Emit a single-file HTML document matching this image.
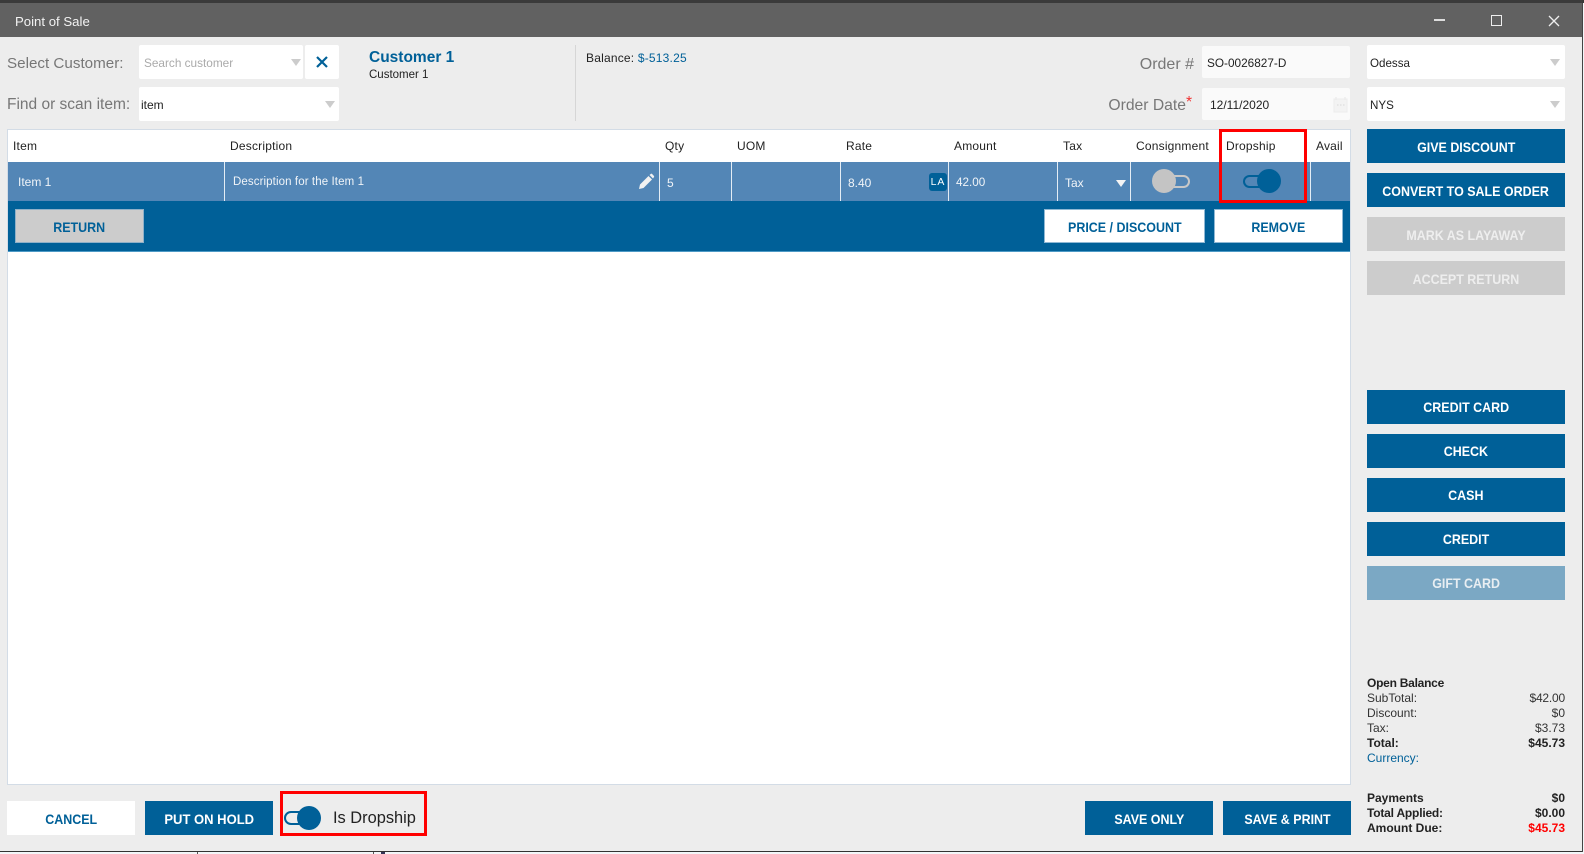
<!DOCTYPE html>
<html><head><meta charset="utf-8"><title>Point of Sale</title>
<style>
*{box-sizing:border-box}
html,body{margin:0;padding:0;width:1584px;height:854px;overflow:hidden;background:#f3f6f9;font-family:"Liberation Sans",sans-serif}
.a{position:absolute}
.t{position:absolute;white-space:nowrap;line-height:16px;font-size:12px;color:#222}
.h{position:absolute;white-space:nowrap;line-height:16px;font-size:12px;color:#222;top:138px;letter-spacing:.2px}
.w{position:absolute;white-space:nowrap;line-height:16px;font-size:12px;color:#f0f4f8}
.b{position:absolute;display:flex;align-items:center;justify-content:center;height:34px;padding-top:1px;font-size:14px;font-weight:bold;color:#fff;background:#006098;white-space:nowrap}
.b span{display:inline-block;transform:scaleX(.89)}
.r{width:198px;left:1367px}
.p{padding-top:0}
.l{background:#fff;color:#006098;border:1px solid #8fb8d4}
.lb{position:absolute;white-space:nowrap;font-size:16px;line-height:20px;color:#777}
.box{position:absolute;background:#fff;border-radius:2px}
.v{position:absolute;width:1px;top:162px;height:39px;background:#e4edf5}
.rb{position:absolute;border:3px solid #f00}
.tri{position:absolute;width:0;height:0;border-left:5px solid transparent;border-right:5px solid transparent;border-top:7px solid #ccc}
.rt{position:absolute;right:19px;white-space:nowrap;font-size:12px;line-height:15px;color:#333}
.lt{position:absolute;left:1367px;white-space:nowrap;font-size:12px;line-height:15px;color:#333}
.bd{font-weight:bold;color:#222}
</style></head><body>
<div class="a" style="left:0;top:0;width:1584px;height:3px;background:#3a3a3a"></div>
<div class="a" style="left:0;top:3px;width:1582px;height:34px;background:#616161"></div>
<div class="a" style="left:0;top:37px;width:1582px;height:814px;background:#ededed"></div>
<div class="a" style="left:0;top:851px;width:1582px;height:1px;background:#333"></div>
<div class="a" style="left:1582px;top:3px;width:1px;height:849px;background:#444"></div>
<div class="a" style="left:197px;top:852px;width:1px;height:2px;background:#555"></div>
<div class="a" style="left:373px;top:852px;width:1px;height:2px;background:#555"></div>
<div class="a" style="left:381px;top:852px;width:4px;height:2px;background:#335"></div>
<div class="t" style="left:15px;top:14px;font-size:13.200px;color:#f2f2f2">Point of Sale</div>
<div class="a" style="left:1434px;top:19px;width:11px;height:2px;background:#ddd"></div>
<div class="a" style="left:1491px;top:15px;width:11px;height:11px;border:1.5px solid #eee"></div>
<svg class="a" style="left:1547px;top:14px" width="14" height="14" viewBox="0 0 14 14"><path d="M2 2L12 12M12 2L2 12" stroke="#eee" stroke-width="1.3"/></svg>

<div class="lb" style="left:7px;top:54px;font-size:15.200px">Select Customer:</div>
<div class="lb" style="left:7px;top:95px;font-size:15.500px">Find or scan item:</div>
<div class="box" style="left:139px;top:45px;width:164px;height:34px"></div>
<div class="box" style="left:305px;top:45px;width:34px;height:34px"></div>
<div class="box" style="left:139px;top:87px;width:200px;height:34px"></div>
<div class="t" style="left:144px;top:55px;color:#aaa;font-size:11.800px">Search customer</div>
<div class="t" style="left:141px;top:97px;color:#222">item</div>
<div class="tri" style="left:291px;top:59px"></div>
<div class="tri" style="left:325px;top:101px"></div>
<svg class="a" style="left:315px;top:55px" width="14" height="14" viewBox="0 0 14 14"><path d="M2 2L12 12M12 2L2 12" stroke="#006098" stroke-width="2.2"/></svg>
<div class="t" style="left:369px;top:50px;font-size:15.500px;font-weight:bold;color:#006098">Customer 1</div>
<div class="t" style="left:369px;top:67px;font-size:11.500px">Customer 1</div>
<div class="a" style="left:575px;top:45px;width:1px;height:76px;background:#d6d6d6"></div>
<div class="t" style="left:586px;top:50px;letter-spacing:.2px">Balance: <span style="color:#006098">$-513.25</span></div>

<div class="lb" style="right:390px;top:55px">Order #</div>
<div class="lb" style="right:398px;top:96px;font-size:15.700px">Order Date<span style="color:#e33;position:absolute;left:100%;top:-3px">*</span></div>
<div class="box" style="left:1202px;top:46px;width:148px;height:32px;background:#fafafa"></div>
<div class="box" style="left:1202px;top:88px;width:148px;height:32px;background:#fafafa"></div>
<div class="t" style="left:1207px;top:55px;font-size:11.800px">SO-0026827-D</div>
<div class="t" style="left:1210px;top:97px">12/11/2020</div>
<svg class="a" style="left:1333px;top:96px" width="15" height="17" viewBox="0 0 15 17"><path d="M1 3H14V16H1Z" fill="#f3f3f3" stroke="#ececec"/><path d="M3 1V4M12 1V4" stroke="#ececec" stroke-width="1.5"/><path d="M4 9H5.500M7 9H8.500M10 9H11.500" stroke="#e2e2e2" stroke-width="1.500"/></svg>
<div class="box" style="left:1367px;top:45px;width:198px;height:34px"></div>
<div class="box" style="left:1367px;top:87px;width:198px;height:34px"></div>
<div class="t" style="left:1370px;top:56px;font-size:11.600px">Odessa</div>
<div class="t" style="left:1370px;top:98px;font-size:11.600px">NYS</div>
<div class="tri" style="left:1550px;top:59px"></div>
<div class="tri" style="left:1550px;top:101px"></div>

<!-- table -->
<div class="a" style="left:7px;top:129px;width:1344px;height:656px;background:#fff;border:1px solid #d3dce6"></div>
<div class="a" style="left:8px;top:162px;width:1342px;height:39px;background:#5386b6"></div>
<div class="a" style="left:8px;top:201px;width:1342px;height:51px;background:#006098;border-bottom:1px solid #4d9ac6"></div>
<div class="h" style="left:13px">Item</div>
<div class="h" style="left:230px">Description</div>
<div class="h" style="left:665px">Qty</div>
<div class="h" style="left:737px">UOM</div>
<div class="h" style="left:846px">Rate</div>
<div class="h" style="left:954px">Amount</div>
<div class="h" style="left:1063px">Tax</div>
<div class="h" style="left:1136px">Consignment</div>
<div class="h" style="left:1226px">Dropship</div>
<div class="h" style="left:1316px">Avail</div>
<div class="v" style="left:224px"></div><div class="v" style="left:659px"></div><div class="v" style="left:731px"></div><div class="v" style="left:840px"></div><div class="v" style="left:948px"></div><div class="v" style="left:1057px"></div><div class="v" style="left:1130px"></div><div class="v" style="left:1221px"></div><div class="v" style="left:1310px"></div>
<div class="w" style="left:18px;top:174px">Item 1</div>
<div class="w" style="left:233px;top:174px;font-size:11.500px;letter-spacing:.1px">Description for the Item 1</div>
<svg class="a" style="left:638px;top:173px" width="17" height="17" viewBox="0 0 17 17"><path d="M1 16L2 11.500L10.500 3L14 6.500L5.500 15Z" fill="#f2f2f2"/><path d="M11.500 2L13 .8Q13.500 .5 14 .9L16 3Q16.300 3.500 16 4L15 5.500Z" fill="#f2f2f2"/></svg>
<div class="w" style="left:667px;top:175px">5</div>
<div class="w" style="left:848px;top:175px">8.40</div>
<div class="a" style="left:929px;top:173px;width:18px;height:18px;background:#006098;border-radius:3px;color:#fff;font-size:10.500px;line-height:18px;text-align:center;letter-spacing:1px">LA</div>
<div class="w" style="left:956px;top:175px;font-size:11.700px">42.00</div>
<div class="w" style="left:1065px;top:175px">Tax</div>
<div class="tri" style="left:1116px;top:180px;border-top-color:#f4f4f4"></div>
<div class="a" style="left:1165px;top:175px;width:25px;height:13px;border:2px solid #c8c8c8;border-radius:7px"></div>
<div class="a" style="left:1152px;top:169px;width:24px;height:24px;background:#c4c4c4;border-radius:50%"></div>
<div class="a" style="left:1243px;top:175px;width:24px;height:13px;border:2px solid #006098;border-radius:7px"></div>
<div class="a" style="left:1257px;top:169px;width:24px;height:24px;background:#006098;border-radius:50%"></div>
<div class="rb" style="left:1219px;top:129px;width:88px;height:74px"></div>

<div class="b" style="left:15px;top:209px;width:129px;background:#ccc;color:#006098;border:1px solid #8fb0c8"><span>RETURN</span></div>
<div class="b l" style="left:1044px;top:209px;width:161px"><span>PRICE / DISCOUNT</span></div>
<div class="b l" style="left:1214px;top:209px;width:129px"><span>REMOVE</span></div>

<div class="b r" style="top:129px"><span>GIVE DISCOUNT</span></div>
<div class="b r" style="top:173px"><span>CONVERT TO SALE ORDER</span></div>
<div class="b r" style="top:217px;background:#ccc;color:#eee"><span>MARK AS LAYAWAY</span></div>
<div class="b r" style="top:261px;background:#ccc;color:#eee"><span>ACCEPT RETURN</span></div>
<div class="b r p" style="top:390px"><span>CREDIT CARD</span></div>
<div class="b r p" style="top:434px"><span>CHECK</span></div>
<div class="b r p" style="top:478px"><span>CASH</span></div>
<div class="b r p" style="top:522px"><span>CREDIT</span></div>
<div class="b r p" style="top:566px;background:#7ba8c4;color:#e8eef2"><span>GIFT CARD</span></div>

<div class="lt bd" style="top:676px;letter-spacing:-.25px">Open Balance</div>
<div class="lt" style="top:691px">SubTotal:</div><div class="rt" style="top:691px;letter-spacing:-.2px">$42.00</div>
<div class="lt" style="top:706px">Discount:</div><div class="rt" style="top:706px">$0</div>
<div class="lt" style="top:721px">Tax:</div><div class="rt" style="top:721px">$3.73</div>
<div class="lt bd" style="top:736px">Total:</div><div class="rt bd" style="top:736px">$45.73</div>
<div class="lt" style="top:751px;color:#006098">Currency:</div>
<div class="lt bd" style="top:791px">Payments</div><div class="rt bd" style="top:791px">$0</div>
<div class="lt bd" style="top:806px;letter-spacing:-.2px">Total Applied:</div><div class="rt bd" style="top:806px">$0.00</div>
<div class="lt bd" style="top:821px">Amount Due:</div><div class="rt bd" style="top:821px;color:#f00">$45.73</div>

<div class="b" style="left:7px;top:801px;width:128px;background:#fff;color:#006098"><span>CANCEL</span></div>
<div class="b" style="left:145px;top:801px;width:128px"><span style="transform:scaleX(.93)">PUT ON HOLD</span></div>
<div class="rb" style="left:280px;top:791px;width:147px;height:45px"></div>
<div class="a" style="left:284px;top:811px;width:26px;height:14px;border:2px solid #006098;border-radius:7px"></div>
<div class="a" style="left:297px;top:806px;width:24px;height:24px;background:#006098;border-radius:50%"></div>
<div class="t" style="left:333px;top:809px;font-size:16.400px;line-height:18px">Is Dropship</div>
<div class="b" style="left:1085px;top:801px;width:128px"><span>SAVE ONLY</span></div>
<div class="b" style="left:1223px;top:801px;width:128px"><span>SAVE &amp; PRINT</span></div>
</body></html>
